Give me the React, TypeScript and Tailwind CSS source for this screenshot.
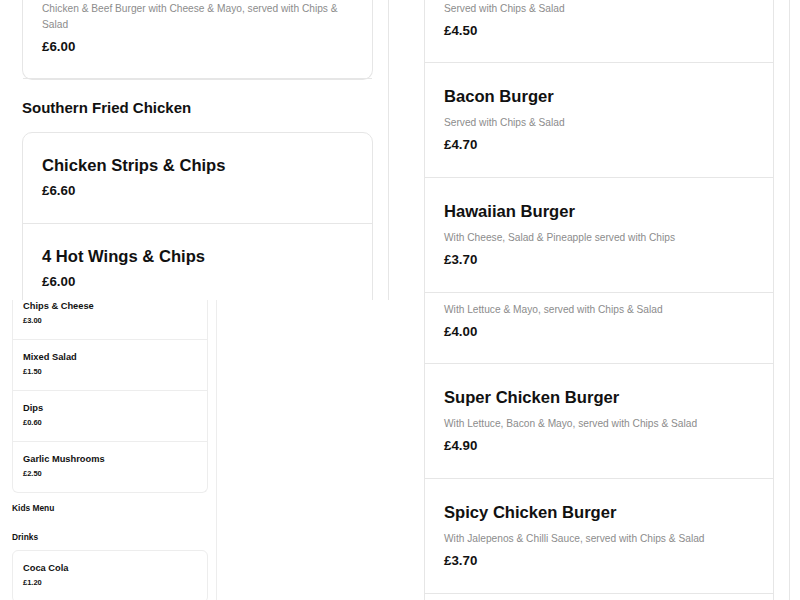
type Item = { name?: string; desc?: string; price: string };

const font = { fontFamily: '"Liberation Sans", Arial, sans-serif' };

function BigRow({ item, first }: { item: Item; first?: boolean }) {
    const pad = first ? "pt-[1px] pb-[21px]" : item.desc ? "pt-[21px] pb-[22px]" : "pt-[20px] pb-[22px]";
    return (
        <div className={`px-[19px] border-b border-[#e6e6e6] ${pad}`}>
            {item.name && (
                <div className="text-[16.6px] leading-[26px] font-bold text-[#111]">{item.name}</div>
            )}
            {item.desc && (
                <div className={`text-[10.2px] leading-[16px] text-[#8c8c8c] ${item.name ? "mt-[5px]" : ""}`}>
                    {item.desc}
                </div>
            )}
            <div className={`text-[13.3px] leading-[20px] font-bold text-[#111] ${item.desc ? "mt-[4px]" : "mt-[2px]"}`}>
                {item.price}
            </div>
        </div>
    );
}

function SmallRow({ item, last }: { item: Item; last?: boolean }) {
    return (
        <div className={`px-[10px] pt-[11px] pb-[13px] ${last ? "" : "border-b border-[#ededed]"}`}>
            <div className="text-[9.3px] leading-[12px] font-bold text-[#111]">{item.name}</div>
            <div className="mt-[4px] text-[7.5px] leading-[10px] font-bold text-[#111]">{item.price}</div>
        </div>
    );
}

const sides: Item[] = [
    { name: "Chips & Cheese", price: "£3.00" },
    { name: "Mixed Salad", price: "£1.50" },
    { name: "Dips", price: "£0.60" },
    { name: "Garlic Mushrooms", price: "£2.50" },
];

const burgersTop: Item[] = [
    { name: "Bacon Burger", desc: "Served with Chips & Salad", price: "£4.70" },
    { name: "Hawaiian Burger", desc: "With Cheese, Salad & Pineapple served with Chips", price: "£3.70" },
];

const burgersBottom: Item[] = [
    { name: "Super Chicken Burger", desc: "With Lettuce, Bacon & Mayo, served with Chips & Salad", price: "£4.90" },
    { name: "Spicy Chicken Burger", desc: "With Jalepenos & Chilli Sauce, served with Chips & Salad", price: "£3.70" },
];

export default function App() {
    return (
        <div className="grid grid-cols-[400px_400px] w-[800px] h-[600px] bg-white overflow-hidden" style={font}>
            {/* Left column */}
            <div className="flex flex-col">
                {/* Zoomed menu */}
                <div className="h-[300px] shrink-0 overflow-hidden">
                    <div className="w-[389px] h-full border-r border-[#e6e6e6] pl-[22px] pr-[15px]">
                        <div className="border-x border-b border-[#e6e6e6] rounded-b-[10px]">
                            <BigRow
                                first
                                item={{
                                    desc: "Chicken & Beef Burger with Cheese & Mayo, served with Chips & Salad",
                                    price: "£6.00",
                                }}
                            />
                        </div>
                        <h2 className="mt-[19px] text-[15px] leading-[18px] font-bold text-[#111]">
                            Southern Fried Chicken
                        </h2>
                        <div className="mt-[15px] border border-[#e6e6e6] rounded-[10px]">
                            <BigRow item={{ name: "Chicken Strips & Chips", price: "£6.60" }} />
                            <BigRow item={{ name: "4 Hot Wings & Chips", price: "£6.00" }} />
                        </div>
                    </div>
                </div>

                {/* Small menu */}
                <div className="h-[300px] shrink-0 overflow-hidden">
                    <div className="flex flex-col w-[217px] h-[300px] border-r border-[#ededed] pl-[12px] pr-[8px]">
                        <div className="-mt-[11px] border-x border-b border-[#ededed] rounded-b-[6px]">
                            {sides.map((s, i) => (
                                <SmallRow key={s.name} item={s} last={i === sides.length - 1} />
                            ))}
                        </div>
                        <h3 className="mt-[10px] text-[8.4px] leading-[10px] font-bold text-[#111]">Kids Menu</h3>
                        <h3 className="mt-[19px] text-[8.4px] leading-[10px] font-bold text-[#111]">Drinks</h3>
                        <div className="mt-[8px] border border-[#ededed] rounded-[6px]">
                            <SmallRow item={{ name: "Coca Cola", price: "£1.20" }} />
                        </div>
                    </div>
                </div>
            </div>

            {/* Right column */}
            <div className="flex flex-col">
                <div className="h-[300px] shrink-0 overflow-hidden">
                    <div className="w-[390px] h-full border-r border-[#e6e6e6] pl-[24px] pr-[15px]">
                        <div className="h-full border-x border-[#e6e6e6]">
                            <BigRow first item={{ desc: "Served with Chips & Salad", price: "£4.50" }} />
                            {burgersTop.map((b) => (
                                <BigRow key={b.name} item={b} />
                            ))}
                        </div>
                    </div>
                </div>
                <div className="h-[300px] shrink-0 overflow-hidden">
                    <div className="w-[390px] h-full border-r border-[#e6e6e6] pl-[24px] pr-[15px]">
                        <div className="h-full border-x border-[#e6e6e6] pt-[1px]">
                            <BigRow first item={{ desc: "With Lettuce & Mayo, served with Chips & Salad", price: "£4.00" }} />
                            {burgersBottom.map((b) => (
                                <BigRow key={b.name} item={b} />
                            ))}
                        </div>
                    </div>
                </div>
            </div>
        </div>
    );
}
